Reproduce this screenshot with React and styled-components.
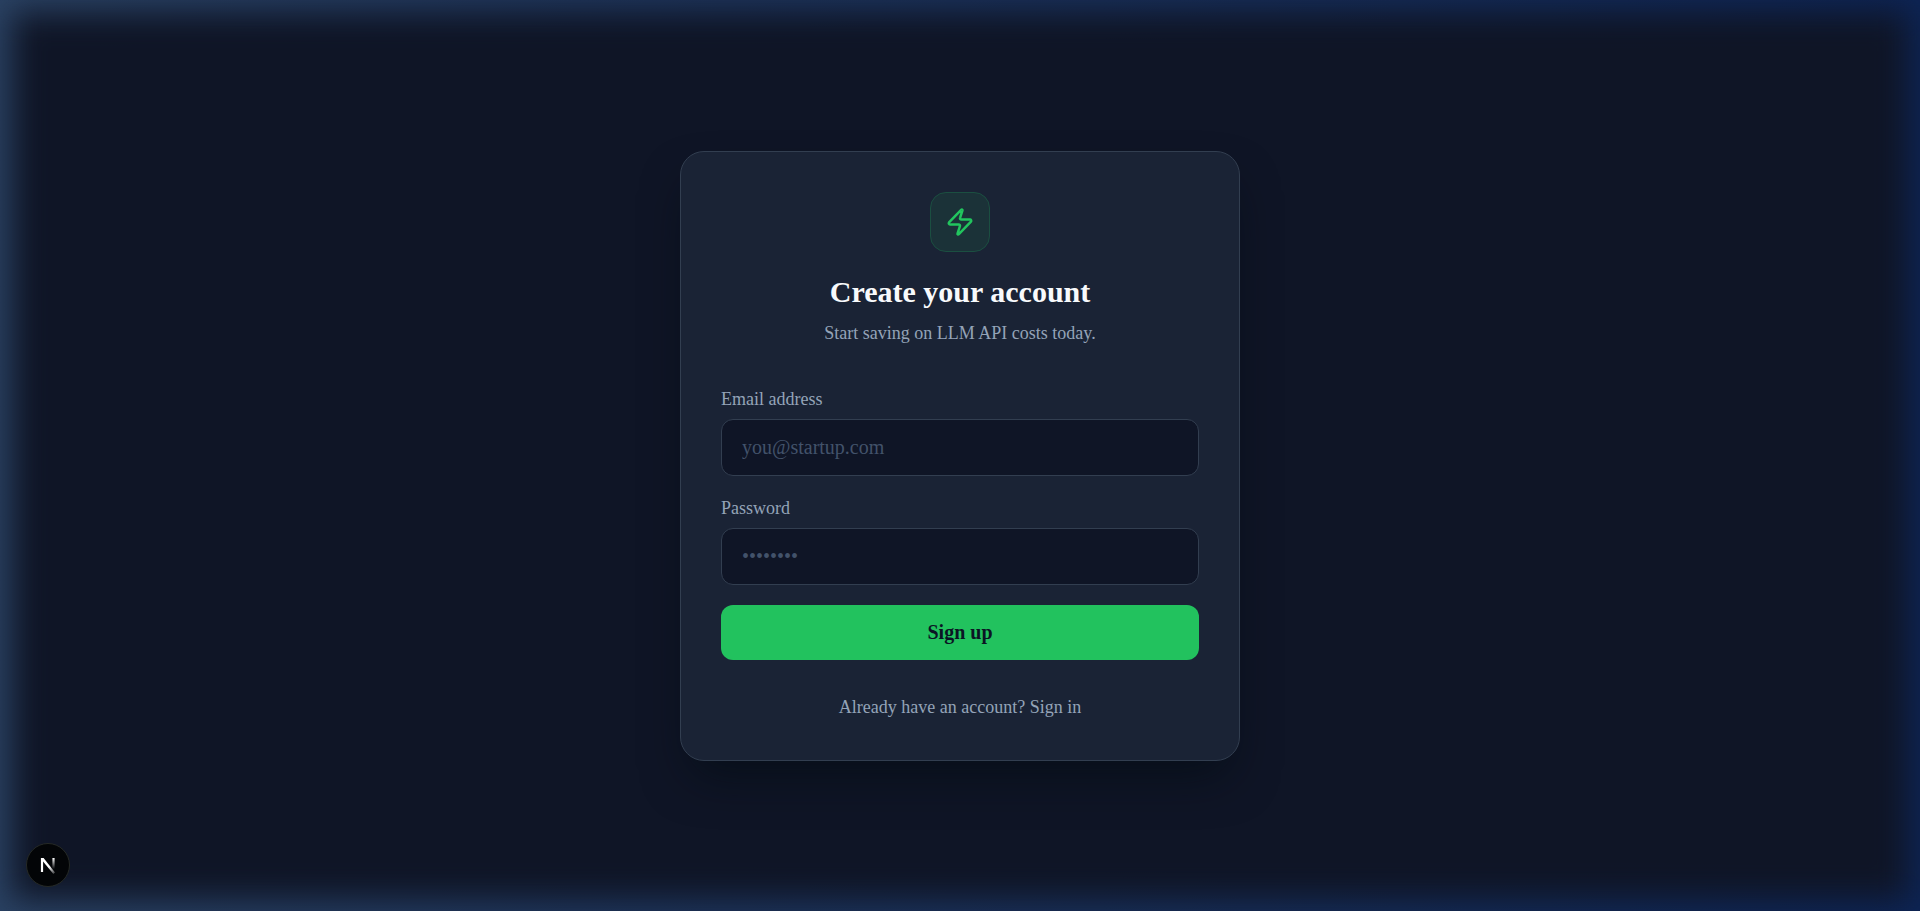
import React from 'react';
import styled, { createGlobalStyle, css } from 'styled-components';
import { Zap } from 'lucide-react';

const GlobalStyle = createGlobalStyle`
  *,
  *::before,
  *::after {
    box-sizing: border-box;
  }

  body {
    background: #0f1526;
    color: #f8fafc;
    font-family: 'Liberation Serif', 'Times New Roman', serif;
    margin: 0;
  }
`;

const Page = styled.main`
  align-items: center;
  background: linear-gradient(to right, #2a4263, #1f365c 30%, #0d2454);
  display: flex;
  isolation: isolate;
  justify-content: center;
  min-height: 100vh;
  overflow: hidden;
  padding: 40px 20px;
  position: relative;

  /* dark centre with soft edges, leaves a glow round the window */
  &::before {
    background: #0f1526;
    content: '';
    filter: blur(16px);
    inset: 12px;
    position: absolute;
    z-index: -1;
  }
`;

const Card = styled.section`
  background: #1a2335;
  border: 1px solid #323e50;
  border-radius: 24px;
  box-shadow: 0 24px 48px -12px rgba(0, 10, 15, 0.6);
  max-width: 560px;
  padding: 40px;
  width: 100%;
`;

const Header = styled.header`
  align-items: center;
  display: flex;
  flex-direction: column;
  margin-bottom: 41px;
  text-align: center;
`;

const LogoBox = styled.div`
  align-items: center;
  background: #1b3238;
  border: 1px solid #1b4f41;
  border-radius: 16px;
  color: #22c55e;
  display: flex;
  height: 60px;
  justify-content: center;
  margin-bottom: 20px;
  width: 60px;
`;

const Title = styled.h1`
  font-size: 30px;
  font-weight: 700;
  line-height: 40px;
  margin: 0 0 8px;
`;

const mutedText = css`
  color: #94a3b8;
  font-size: 18px;
  line-height: 26px;
`;

const Subtitle = styled.p`
  ${mutedText}
  margin: 0;
`;

const Form = styled.form`
  display: flex;
  flex-direction: column;
  gap: 20px;
`;

const Field = styled.div`
  display: flex;
  flex-direction: column;
  gap: 8px;
`;

const Label = styled.label`
  ${mutedText}
  line-height: 24px;
`;

const Input = styled.input`
  background: #0f1526;
  border: 1px solid #323e50;
  border-radius: 12px;
  color: #f8fafc;
  font-family: inherit;
  font-size: 20px;
  height: 57px;
  outline: none;
  padding: 0 20px;
  width: 100%;

  &::placeholder {
    color: #42526a;
    opacity: 1;
  }

  &:focus {
    border-color: #22c55e;
  }
`;

const SubmitButton = styled.button`
  background: #22c25e;
  border: none;
  border-radius: 12px;
  color: #0b1524;
  cursor: pointer;
  font-family: inherit;
  font-size: 20px;
  font-weight: 700;
  height: 55px;
`;

const Footer = styled.p`
  ${mutedText}
  margin: 34px 0 0;
  text-align: center;
`;

const SignInLink = styled.a`
  color: inherit;
  text-decoration: none;
`;

const DevBadge = styled.button`
  align-items: center;
  background: #030507;
  border: 1px solid #262a26;
  border-radius: 50%;
  bottom: 24px;
  display: flex;
  height: 44px;
  justify-content: center;
  left: 26px;
  padding: 0;
  position: fixed;
  width: 44px;
`;

const NextMark = () => (
  <svg width='18' height='18' viewBox='0 0 18 18' fill='none' aria-hidden='true'>
    <defs>
      <linearGradient id='stem' x1='0' y1='2' x2='0' y2='13' gradientUnits='userSpaceOnUse'>
        <stop stopColor='#fff' />
        <stop offset='1' stopColor='#fff' stopOpacity='0' />
      </linearGradient>
      <linearGradient id='slash' x1='10' y1='11' x2='16' y2='19' gradientUnits='userSpaceOnUse'>
        <stop stopColor='#fff' />
        <stop offset='1' stopColor='#fff' stopOpacity='0.1' />
      </linearGradient>
    </defs>
    <path d='M2 2H4.6L16 16.6L14.4 18L2 3Z' fill='url(#slash)' />
    <path d='M3 2V16' stroke='#fff' strokeWidth='2.2' />
    <path d='M14.5 2V13' stroke='url(#stem)' strokeWidth='2.2' />
  </svg>
);

const App = () => {
  return (
    <Page>
      <GlobalStyle />
      <Card>
        <Header>
          <LogoBox>
            <Zap size={30} strokeWidth={2} />
          </LogoBox>
          <Title>Create your account</Title>
          <Subtitle>Start saving on LLM API costs today.</Subtitle>
        </Header>
        <Form onSubmit={(event) => event.preventDefault()}>
          <Field>
            <Label htmlFor='email'>Email address</Label>
            <Input id='email' type='email' placeholder='you@startup.com' />
          </Field>
          <Field>
            <Label htmlFor='password'>Password</Label>
            <Input id='password' type='password' placeholder='••••••••' />
          </Field>
          <SubmitButton type='submit'>Sign up</SubmitButton>
        </Form>
        <Footer>
          Already have an account? <SignInLink href='/login'>Sign in</SignInLink>
        </Footer>
      </Card>
      <DevBadge type='button' aria-label='Open dev tools'>
        <NextMark />
      </DevBadge>
    </Page>
  );
};

export default App;
